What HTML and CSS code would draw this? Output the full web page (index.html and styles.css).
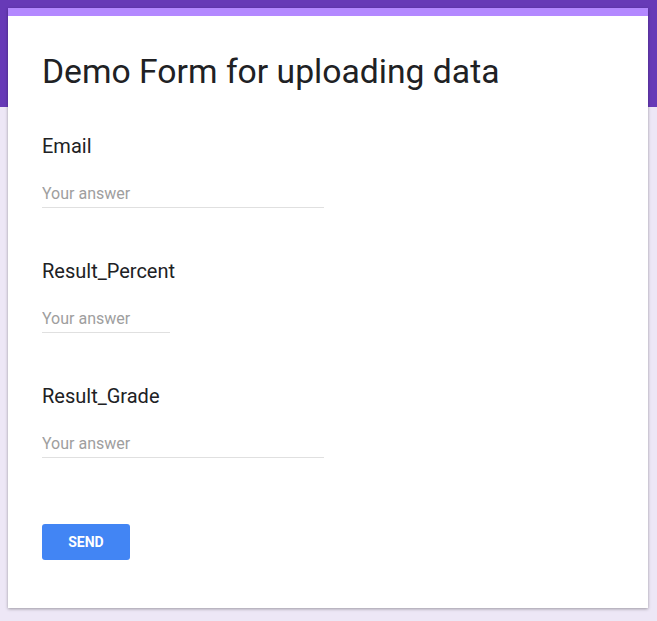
FILE: index.html
```html
<!DOCTYPE html>
<html lang="en">
<head>
  <meta charset="UTF-8" />
  <title>Demo Form for uploading data</title>
  <link rel="stylesheet" href="styles.css">
</head>
<body>
  <div class="page">
    <form class="card">
      <h1 class="title">Demo Form for uploading data</h1>

      <div class="questions">
        <div class="question">
          <label class="label" for="email">Email</label>
          <input class="answer" id="email" type="text" placeholder="Your answer" />
        </div>

        <div class="question">
          <label class="label" for="percent">Result_Percent</label>
          <input class="answer short" id="percent" type="text" placeholder="Your answer" />
        </div>

        <div class="question">
          <label class="label" for="grade">Result_Grade</label>
          <input class="answer" id="grade" type="text" placeholder="Your answer" />
        </div>
      </div>

      <div class="actions">
        <button class="send" type="button">Send</button>
      </div>
    </form>
  </div>
</body>
</html>
```

FILE: styles.css
```css
body {
  margin: 0;
  font-family: Roboto, "Liberation Sans", sans-serif;
  background: linear-gradient(#673ab7 0, #673ab7 107px, #ede7f6 107px) no-repeat;
  background-color: #ede7f6;
  min-height: 621px;
}

.page {
  padding: 8px 9px 13px 8px;
}

.card {
  background: #fff;
  border-top: 8px solid #b388ff;
  box-shadow: 0 1px 3px rgba(0,0,0,0.35);
  padding: 36px 34px 0;
  height: 600px;
  box-sizing: border-box;
}

.title {
  margin: 0 0 42px;
  font-size: 33.7px;
  font-weight: 400;
  line-height: 40px;
  color: #202124;
}

.questions {
  display: flex;
  flex-direction: column;
  gap: 51px;
}

.question {
  display: flex;
  flex-direction: column;
  align-items: flex-start;
}

.label {
  height: 24px;
  font-size: 20px;
  line-height: 24px;
  color: #202124;
}

.answer {
  box-sizing: border-box;
  height: 29px;
  margin-top: 21px;
  width: 282px;
  padding: 4px 0;
  border: none;
  border-bottom: 1px solid #e0e0e0;
  font-family: inherit;
  font-size: 16px;
  line-height: 20px;
  color: #202124;
  outline: none;
  background: transparent;
}

.answer.short {
  width: 128px;
}

.answer::placeholder {
  color: #9e9e9e;
}

.actions {
  margin-top: 66px;
}

.send {
  width: 88px;
  height: 36px;
  border: none;
  border-radius: 3px;
  background: #4285f4;
  color: #fff;
  font-family: inherit;
  font-size: 14px;
  font-weight: 700;
  text-transform: uppercase;
  cursor: pointer;
}
```
